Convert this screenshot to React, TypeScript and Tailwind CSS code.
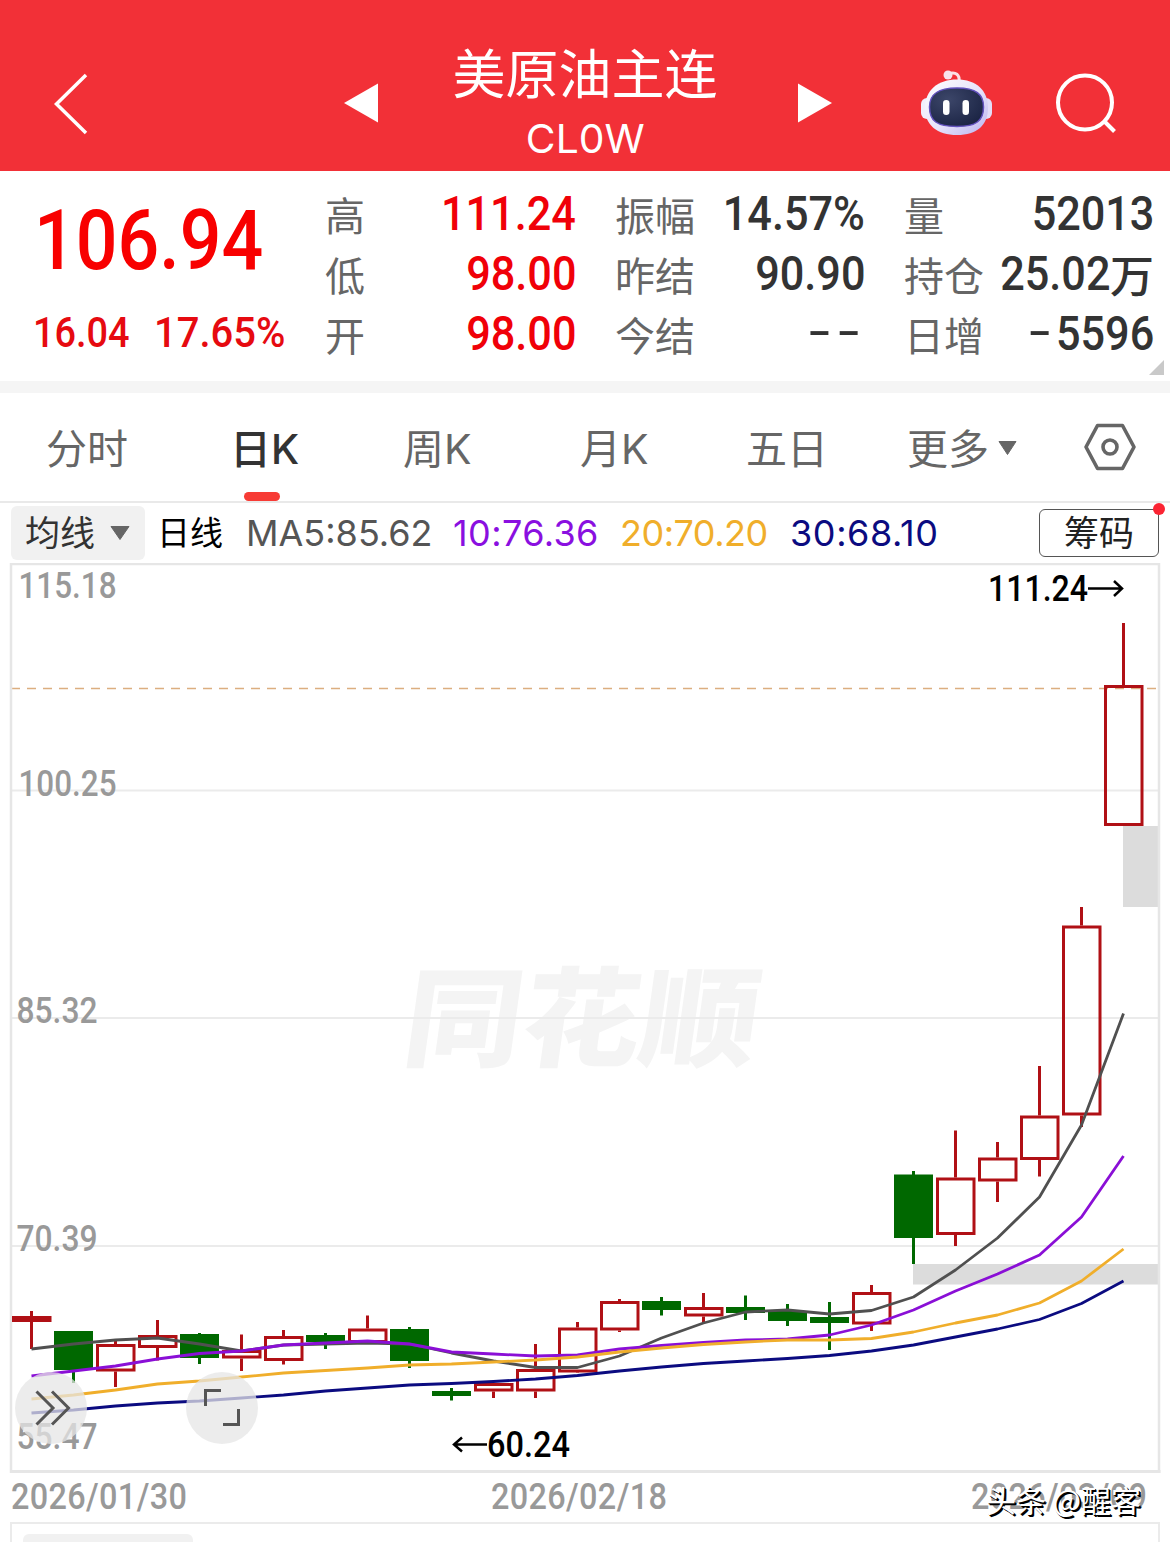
import React from "react";

type Candle = {
  up: boolean;
  high: number;
  top: number;
  bottom: number;
  low: number;
};

const c = (up: boolean, high: number, top: number, bottom: number, low: number): Candle => ({
  up,
  high,
  top,
  bottom,
  low,
});

const candles: Candle[] = [
  c(true, 1311, 1316, 1322, 1349),
  c(false, 1331, 1331, 1370, 1383),
  c(true, 1340.5, 1344, 1371.5, 1387),
  c(true, 1320, 1335, 1348, 1360.5),
  c(false, 1333, 1334, 1358, 1364),
  c(true, 1334.5, 1350, 1358.5, 1371),
  c(true, 1330, 1336, 1361, 1364.5),
  c(false, 1333, 1335, 1342, 1349),
  c(true, 1315.5, 1328.5, 1343, 1343),
  c(false, 1327, 1329, 1361, 1368),
  c(false, 1388, 1391, 1396, 1400.5),
  c(true, 1383, 1383, 1391.5, 1398),
  c(true, 1344, 1369, 1391.5, 1398),
  c(true, 1322, 1327.5, 1372.5, 1373),
  c(true, 1299, 1301, 1330.5, 1332),
  c(false, 1297, 1301, 1310, 1315.5),
  c(true, 1293, 1307, 1316.5, 1323),
  c(false, 1295.5, 1307, 1313, 1320),
  c(false, 1304, 1311, 1321, 1326),
  c(false, 1302, 1317, 1323, 1350),
  c(true, 1285, 1292, 1324.5, 1331),
  c(false, 1171, 1174.5, 1238, 1264),
  c(true, 1130.5, 1177.5, 1235, 1246),
  c(true, 1142, 1157.5, 1181.5, 1202),
  c(true, 1066, 1115.5, 1160, 1176.5),
  c(true, 907, 925.5, 1115.5, 1127),
  c(true, 623, 685, 826, 826),
];

const averages = [
  {
    color: "#505050",
    values: [
      1349, 1344, 1340, 1338, 1344, 1351, 1345, 1344, 1343, 1344, 1353, 1361, 1367.5, 1367.5, 1356,
      1338, 1323, 1312, 1310, 1314, 1310.5, 1297, 1270, 1238, 1197, 1125, 1013.5,
    ],
  },
  {
    color: "#8a0fd6",
    values: [
      1376, 1371, 1366, 1359, 1353.5, 1351, 1345, 1343, 1341, 1344, 1352, 1354, 1356, 1355, 1349,
      1345.5, 1342.5, 1340, 1339, 1335, 1325, 1310, 1291, 1274, 1255, 1217, 1156,
    ],
  },
  {
    color: "#f0ae2b",
    values: [
      1399, 1395, 1390, 1384, 1381, 1377, 1373, 1370.5, 1368, 1365, 1364, 1362, 1360, 1357, 1352,
      1348, 1344.5, 1342, 1340, 1340, 1338.5, 1332, 1323, 1315, 1303, 1281, 1249,
    ],
  },
  {
    color: "#0b0b80",
    values: [
      1413, 1410, 1406, 1403, 1401, 1398, 1395, 1391, 1388, 1385, 1383.5, 1381.5, 1379, 1375.5,
      1371, 1367, 1363.5, 1361, 1358.5, 1355.5, 1351, 1345, 1337, 1329, 1319.5, 1303.5, 1281,
    ],
  },
];

const axisLabels = [
  { text: "115.18", x: 18.5, y: 598, w: 98 },
  { text: "100.25", x: 18.5, y: 796, w: 98 },
  { text: "85.32", x: 16.5, y: 1023, w: 81 },
  { text: "70.39", x: 16.5, y: 1251, w: 81 },
  { text: "55.47", x: 16.5, y: 1448.5, w: 81 },
];

const candleX = (i: number) => 31.5 + i * 42;

const Header = () => (
  <header className="flex h-[171px] bg-[#f23037] text-white">
    <svg className="ml-[52px] mt-[70px] h-[68px] w-[38px]" viewBox="0 0 38 68" fill="none">
      <path d="M34 5 4.500 34 34 63" stroke="white" strokeWidth="3.500" />
    </svg>
    <svg className="ml-[254px] mt-[83px] h-[40px] w-[35px]" viewBox="0 0 35 40">
      <path d="M0 20 34 0.500V39.500Z" fill="white" />
    </svg>
    <div className="ml-[66px] mt-[42px] w-[280px] text-center font-['Inter','Noto_Sans_CJK_SC',sans-serif]">
      <h1 className="text-[53px] leading-[66px] font-normal">美原油主连</h1>
      <p className="text-[40px] leading-[62px]">
        <span className="inline-block scale-x-[1.02]">CL0W</span>
      </p>
    </div>
    <svg className="ml-[73px] mt-[83px] h-[40px] w-[35px]" viewBox="0 0 35 40">
      <path d="M34 20 0 0.500V39.500Z" fill="white" />
    </svg>
    <svg className="ml-[87px] mt-[67px] h-[70px] w-[76px]" viewBox="0 0 76 70">
      <defs>
        <linearGradient id="shell" x1="0" y1="0" x2="1" y2="1">
          <stop offset="0" stopColor="#ffffff" />
          <stop offset="0.550" stopColor="#e6e2fa" />
          <stop offset="1" stopColor="#b9b2ef" />
        </linearGradient>
        <radialGradient id="visor" cx="0.35" cy="0.3" r="0.8">
          <stop offset="0" stopColor="#3c4669" />
          <stop offset="1" stopColor="#1a2343" />
        </radialGradient>
      </defs>
      <path d="M28 7C36 4 40 8 39 15" stroke="#fbdfe4" strokeWidth="3" fill="none" />
      <circle cx="28" cy="8" r="4.500" fill="#f8e3ec" />
      <rect x="1" y="31" width="12" height="21" rx="6" fill="#f1eefc" />
      <rect x="60" y="31" width="12" height="21" rx="6" fill="#e3ddf8" />
      <path
        d="M37 12.500C56 12.500 68 23 68 41C68 58 57 68 37 68C17 68 5 58 5 41C5 23 18 12.500 37 12.500Z"
        fill="url(#shell)"
      />
      <path
        d="M37 21C56 21 63.500 27 63.500 40C63.500 54 56 59.500 37 59.500C17 59.500 9.500 54 9.500 40C9.500 27 18 21 37 21Z"
        fill="url(#visor)"
        stroke="#6251bd"
        strokeWidth="1.500"
      />
      <rect x="23" y="33" width="6.500" height="15" rx="3.250" fill="white" />
      <rect x="42.500" y="33" width="6.500" height="15" rx="3.250" fill="white" />
    </svg>
    <svg className="ml-[59px] mt-[72px] h-[64px] w-[64px]" viewBox="0 0 64 64" fill="none">
      <circle cx="30" cy="30.500" r="27" stroke="white" strokeWidth="4" />
      <path d="M49.500 49.500 59.500 59.500" stroke="white" strokeWidth="4" />
    </svg>
  </header>
);

type CellProps = {
  label: string;
  value: React.ReactNode;
};

const Cell = ({ label, value }: CellProps) => (
  <div className="flex h-[60px] items-center justify-between">
    <span className="font-['Noto_Sans_CJK_SC',sans-serif] text-[40px] leading-[60px] text-[#666]">
      {label}
    </span>
    {value}
  </div>
);

const Num = ({ children }: { children: React.ReactNode }) => (
  <span className="inline-block origin-right scale-x-[0.9] font-['Roboto',sans-serif] text-[48px] leading-[60px] font-medium whitespace-nowrap">
    {children}
  </span>
);

// Roboto's hyphen is too short next to the digits
const Dash = ({ children }: { children: string }) => (
  <span className="relative -top-[2px] inline-block origin-right scale-x-[1.3] font-['Inter',sans-serif] text-[48px] leading-none font-normal tracking-[3px]">
    {children}
  </span>
);

const Quote = () => (
  <section className="flex h-[210px] bg-white text-[#333]">
    <div className="w-[325px] font-['Roboto',sans-serif] font-medium text-[#f80000]">
      <div className="ml-[34px] mt-[21px] w-fit origin-left scale-x-[0.885] text-[83px] leading-[98px]">
        106.94
      </div>
      <div className="ml-[33px] mt-[12px] flex text-[43px] leading-[60px] text-[#e60a10]">
        <span className="w-[121px] origin-left scale-x-[0.88]">16.04</span>
        <span className="origin-left scale-x-[0.93]">17.65%</span>
      </div>
    </div>
    <div className="mt-[13px] w-[251px] text-[#f00008]">
      <Cell label="高" value={<Num>111.24</Num>} />
      <Cell label="低" value={<Num>98.00</Num>} />
      <Cell label="开" value={<Num>98.00</Num>} />
    </div>
    <div className="ml-[39px] mt-[13px] w-[250px]">
      <Cell label="振幅" value={<Num>14.57%</Num>} />
      <Cell label="昨结" value={<Num>90.90</Num>} />
      <Cell
        label="今结"
        value={
          <Num>
            <Dash>--</Dash>
          </Num>
        }
      />
    </div>
    <div className="ml-[39px] mt-[13px] w-[250px]">
      <Cell label="量" value={<Num>52013</Num>} />
      <Cell
        label="持仓"
        value={
          <span className="flex items-center">
            <Num>25.02</Num>
            <span className="font-['Noto_Sans_CJK_SC',sans-serif] text-[44px] leading-[60px] font-medium">
              万
            </span>
          </span>
        }
      />
      <Cell
        label="日增"
        value={
          <Num>
            <Dash>-</Dash>5596
          </Num>
        }
      />
    </div>
    <svg className="-ml-[5px] mt-[189px] h-[15px] w-[15px] shrink-0" viewBox="0 0 15 15">
      <path d="M15 0V15H0Z" fill="#c9c9c9" />
    </svg>
  </section>
);

const Tabs = () => (
  <nav className="box-content flex h-[108px] border-t-[12px] border-b-2 border-t-[#f5f5f5] border-b-[#e9e9e9] font-['Inter','Noto_Sans_CJK_SC',sans-serif] text-[41px] leading-[112px] text-[#666]">
    <span className="ml-[46px] w-[184px]">分时</span>
    <div className="flex w-[173px] flex-col font-medium text-[#333]">
      <span className="h-[99px]">日K</span>
      <span className="ml-[14px] h-[9px] w-[36px] shrink-0 rounded-full bg-[#f73b35]" />
    </div>
    <span className="w-[177px]">周K</span>
    <span className="w-[166px]">月K</span>
    <span className="w-[161px]">五日</span>
    <span className="w-[91px]">更多</span>
    <svg className="mt-[48px] h-[14px] w-[19px]" viewBox="0 0 19 14">
      <path d="M1 0.500H18L9.500 13.500Z" fill="#666" stroke="#666" strokeLinejoin="round" />
    </svg>
    <svg className="ml-[66px] mt-[29px] h-[50px] w-[54px]" viewBox="0 0 54 50" fill="none">
      <path
        d="M14.500 3.500H39.500L51 25L39.500 46.500H14.500L3 25Z"
        stroke="#666"
        strokeWidth="3.600"
        strokeLinejoin="round"
      />
      <circle cx="27" cy="25" r="7" stroke="#666" strokeWidth="3.600" />
    </svg>
  </nav>
);

const Legend = () => (
  <div className="flex h-[60px] items-start font-['Inter','Noto_Sans_CJK_SC',sans-serif] text-[36px] leading-[60px]">
    <button className="ml-[11px] mt-[3px] flex h-[54px] w-[134px] items-center rounded-md bg-[#f1f1f1] pl-[14px] text-[35px] text-[#333]">
      均线
      <svg className="ml-[15px] h-[14px] w-[20px]" viewBox="0 0 20 14">
        <path d="M1 0.500H19L10 13.500Z" fill="#666" stroke="#666" strokeLinejoin="round" />
      </svg>
    </button>
    <span className="ml-[12px] w-[89px] text-[33px] text-black">日线</span>
    <span className="w-[207px] text-[#555]">MA5:85.62</span>
    <span className="w-[167px] tracking-[0.4px] text-[#8a0fe0]">10:76.36</span>
    <span className="w-[170px] tracking-[-0.5px] text-[#f0ae2b]">20:70.20</span>
    <span className="w-[249px] tracking-[0.6px] text-[#0b0b80]">30:68.10</span>
    <button className="relative mt-[6px] flex h-[48px] w-[120px] items-center justify-center rounded-md border-[1.5px] border-[#555] text-[35px] text-[#222]">
      筹码
      <span className="absolute -top-[7px] -right-[7px] h-[12px] w-[12px] rounded-full bg-[#fb2433]" />
    </button>
  </div>
);

const Chart = () => (
  <svg className="block h-[910px] w-[1170px]" viewBox="0 563 1170 910">
    <text
      x="0"
      y="0"
      transform="translate(400 1058) skewX(-8)"
      textLength="354"
      lengthAdjust="spacingAndGlyphs"
      className="font-['Noto_Sans_CJK_SC',sans-serif] text-[108px] font-black"
      fill="#f4f4f4"
    >
      同花顺
    </text>
    {[790.5, 1018, 1246].map((y) => (
      <path key={y} d={`M11 ${y}H1159`} stroke="#ebebeb" strokeWidth="2" />
    ))}
    <path d="M11 688.500H1159" stroke="#dcae80" strokeWidth="1.500" strokeDasharray="9 7" />
    <rect x="1123" y="826" width="36" height="81" fill="#dcdcdc" />
    <rect x="913" y="1264" width="246" height="20.500" fill="#dcdcdc" />
    <path d="M11 1473V564H1159V1473" fill="none" stroke="#e6e6e6" strokeWidth="2.500" />
    <path d="M10 1471.500H1160.500" stroke="#e6e6e6" strokeWidth="3" />

    {axisLabels.map((l) => (
      <text
        key={l.text}
        x={l.x}
        y={l.y}
        textLength={l.w}
        lengthAdjust="spacingAndGlyphs"
        className="font-['Roboto',sans-serif] text-[36px] font-medium"
        fill="#999"
      >
        {l.text}
      </text>
    ))}

    {candles.map((k, i) => {
      const x = candleX(i);
      const color = k.up ? "#b01015" : "#006800";
      return (
        <g key={i} stroke={color} strokeWidth="3" fill="none">
          {k.up ? (
            <>
              <path d={`M${x} ${k.high}V${k.top}M${x} ${k.bottom}V${k.low}`} />
              <rect x={x - 18} y={k.top + 1.5} width="36.500" height={k.bottom - k.top - 3} />
            </>
          ) : (
            <>
              <path d={`M${x} ${k.high}V${k.low}`} />
              <rect
                x={x - 19.5}
                y={k.top}
                width="39"
                height={k.bottom - k.top}
                fill={color}
                stroke="none"
              />
            </>
          )}
        </g>
      );
    })}

    {averages.map((a) => (
      <polyline
        key={a.color}
        points={a.values.map((v, i) => `${candleX(i)},${v}`).join(" ")}
        fill="none"
        stroke={a.color}
        strokeWidth="2.800"
        strokeLinejoin="round"
      />
    ))}

    <g className="font-['Roboto',sans-serif] text-[36px] font-medium" fill="black">
      <text x="988" y="601" textLength="100" lengthAdjust="spacingAndGlyphs">
        111.24
      </text>
      <text x="487" y="1457" textLength="83" lengthAdjust="spacingAndGlyphs">
        60.24
      </text>
    </g>
    <g stroke="black" strokeWidth="2.500" fill="none">
      <path d="M1088 588.500H1122M1114 581 1122 588.500 1114 596" />
      <path d="M487 1444.500H454M462 1437.500 454 1444.500 462 1451.500" />
    </g>

    <g fill="#e6e6e6" fillOpacity="0.75">
      <circle cx="51" cy="1408" r="36" />
      <circle cx="222" cy="1408" r="36" />
    </g>
    <g stroke="#555" strokeWidth="3" fill="none">
      <path d="M36.500 1391.500 53 1408 36.500 1424.500M52 1391.500 68.500 1408 52 1424.500" />
      <path d="M205.500 1406V1390.500H221M238.500 1409V1424.500H223" />
    </g>
  </svg>
);

const DateLabel = ({ children }: { children: string }) => (
  <span className="w-[196px] origin-left scale-x-[0.9] tracking-[0.4px] whitespace-nowrap">
    {children}
  </span>
);

export default function App() {
  return (
    <div className="relative h-[1542px] w-[1170px] overflow-hidden bg-white">
      <Header />
      <Quote />
      <Tabs />
      <Legend />
      <Chart />
      <div className="flex h-[49px] justify-between pr-[3px] pl-[11px] font-['Roboto',sans-serif] text-[36px] leading-[48px] font-medium text-[#999]">
        <DateLabel>2026/01/30</DateLabel>
        <DateLabel>2026/02/18</DateLabel>
        <DateLabel>2026/03/09</DateLabel>
      </div>
      <div className="mx-[10px] h-[40px] border-2 border-[#ebebeb]">
        <div className="mt-[10px] ml-[11px] h-[30px] w-[170px] rounded-md bg-[#f1f1f1]" />
      </div>
      <span className="absolute top-[1477px] left-[986px] font-['Noto_Sans_CJK_SC',sans-serif] text-[30px] leading-[44px] whitespace-nowrap text-white [text-shadow:1px_1px_0_#000,2px_2px_0_#000]">
        头条 @醒客
      </span>
    </div>
  );
}
